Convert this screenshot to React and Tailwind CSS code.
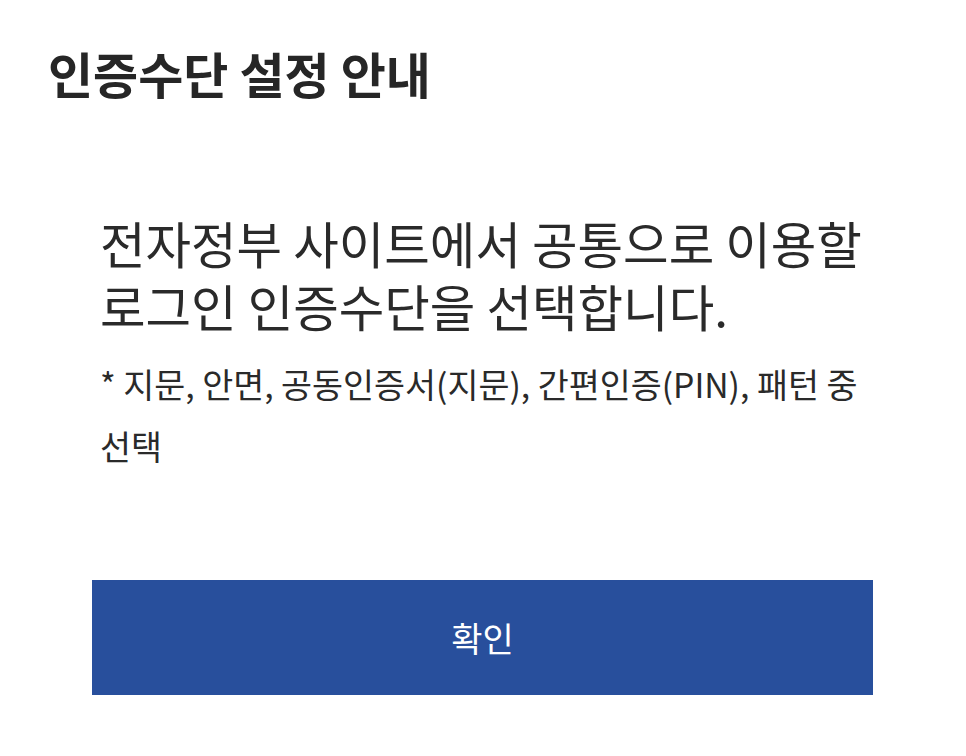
export default function App() {
  return (
    <div
      className="w-[966px] h-[756px] bg-white text-[#222222] overflow-hidden"
      style={{ fontFamily: '"Noto Sans CJK KR", "Noto Sans", sans-serif' }}
    >
      <h1 className="pt-[41px] pl-[48px] text-[49px] font-bold leading-[64px] text-[#262626]">
        인증수단 설정 안내
      </h1>

      <div className="mt-[106px] px-[100px]">
        <p className="text-[49.5px] leading-[63px] text-[#2a2a2a] whitespace-nowrap">
          전자정부 사이트에서 공통으로 이용할
          <br />
          로그인 인증수단을 선택합니다.
        </p>
        <p className="mt-[16px] text-[33.7px] leading-[62px] text-[#2a2a2a] whitespace-nowrap">
          * 지문, 안면, 공동인증서(지문), 간편인증(PIN), 패턴 중
          <br />
          선택
        </p>
      </div>

      <div className="mt-[103px] px-[92px]">
        <button className="w-[781px] h-[115px] bg-[#284f9c] text-white text-[34px] flex items-center justify-center">
          확인
        </button>
      </div>
    </div>
  );
}
